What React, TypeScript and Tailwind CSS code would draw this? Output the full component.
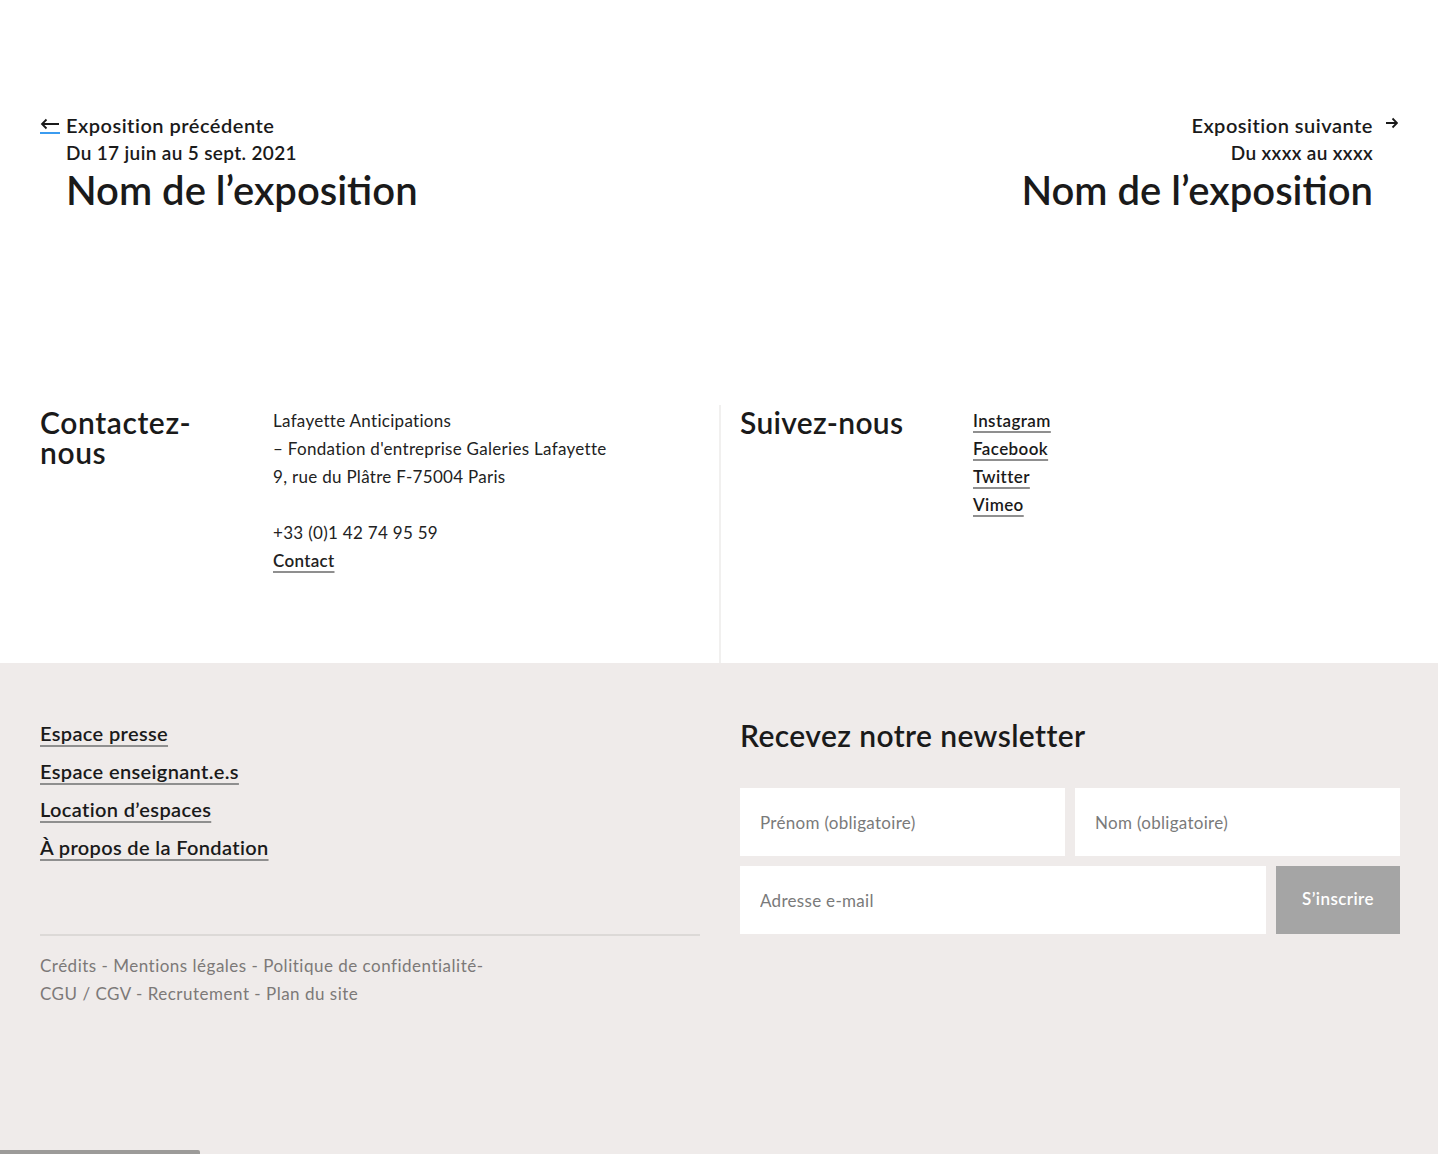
import React from 'react';

const font = { fontFamily: 'Lato, "Noto Sans", sans-serif' };

const ArrowLeft = () => (
    <svg width="20" height="12" viewBox="0 0 20 12" fill="none" stroke="#1a1a1a" strokeWidth="1.8">
        <path d="M19 6H2M6.5 1.5L2 6l4.5 4.5" />
    </svg>
);

const ArrowRight = () => (
    <svg width="12" height="12" viewBox="0 0 12 12" fill="none" stroke="#1a1a1a" strokeWidth="1.8">
        <path d="M0 6h11M6.5 1.5L11 6l-4.5 4.5" />
    </svg>
);

const linkCls = 'underline decoration-2 underline-offset-4 decoration-[#8f8f8f]';
const inputCls = 'h-[68px] bg-white px-5 text-[17px] tracking-[0.3px] text-[#666] outline-none placeholder:text-[#7a7a7a]';

const App = () => {
    return (
        <div className="min-h-[1154px] flex flex-col bg-white text-[#1a1a1a]" style={font}>
            {/* prev / next */}
            <div className="flex justify-between px-10 pt-[112px] h-[405px]">
                <div>
                    <div className="flex items-center">
                        <span className="w-[20px] mr-[6px] relative top-[1px] pb-[2px] border-b-2 border-[#3b9cf0] flex">
                            <ArrowLeft />
                        </span>
                        <span className="text-[20px] font-semibold leading-[26px] tracking-[0.5px]">Exposition précédente</span>
                    </div>
                    <div className="pl-[26px] text-[19px] font-semibold leading-[28px] mt-[1px] tracking-[0.35px]">Du 17 juin au 5 sept. 2021</div>
                    <div className="pl-[26px] text-[40px] font-semibold leading-[46px]">Nom de l’exposition</div>
                </div>
                <div className="flex flex-col items-end">
                    <div className="flex items-center">
                        <span className="text-[20px] font-semibold leading-[26px] tracking-[0.5px]">Exposition suivante</span>
                        <span className="ml-[13px] relative -top-[2px] flex"><ArrowRight /></span>
                    </div>
                    <div className="pr-[25px] text-[19px] font-semibold leading-[28px] mt-[1px] tracking-[0.35px]">Du xxxx au xxxx</div>
                    <div className="pr-[25px] text-[40px] font-semibold leading-[46px]">Nom de l’exposition</div>
                </div>
            </div>

            {/* contact / social */}
            <div className="grid grid-cols-[721px_1fr] h-[258px]">
                <div className="flex pl-10 pt-[2px] border-r-2 border-[#f1f0ef]">
                    <h2 className="w-[233px] text-[30px] font-semibold leading-[30px] tracking-[0.6px]">Contactez-<br />nous</h2>
                    <div className="text-[17px] leading-[28px] tracking-[0.3px] text-[#222]">
                        <p>Lafayette Anticipations</p>
                        <p>– Fondation d'entreprise Galeries Lafayette</p>
                        <p>9, rue du Plâtre F-75004 Paris</p>
                        <p className="mt-[28px]">+33 (0)1 42 74 95 59</p>
                        <a className={`font-semibold ${linkCls}`}>Contact</a>
                    </div>
                </div>
                <div className="flex pl-[19px] pt-[2px]">
                    <h2 className="w-[233px] text-[30px] font-semibold leading-[30px] tracking-[0.3px]">Suivez-nous</h2>
                    <div className="flex flex-col text-[17px] leading-[28px] font-semibold tracking-[0.4px]">
                        <a className={linkCls}>Instagram</a>
                        <a className={linkCls}>Facebook</a>
                        <a className={linkCls}>Twitter</a>
                        <a className={linkCls}>Vimeo</a>
                    </div>
                </div>
            </div>

            {/* footer */}
            <div className="flex-1 bg-[#efebea] flex flex-col">
                <div className="grid grid-cols-2 flex-1">
                    <div className="pl-10 pr-[19px] pt-[56px]">
                        <div className="flex flex-col items-start gap-[10px] text-[20px] font-semibold leading-[28px] tracking-[0.35px]">
                            <a className={linkCls}>Espace presse</a>
                            <a className={linkCls}>Espace enseignant.e.s</a>
                            <a className={linkCls}>Location d’espaces</a>
                            <a className={linkCls}>À propos de la Fondation</a>
                        </div>
                        <div className="mt-[73px] border-t-2 border-[#dcd9d7] pt-[16px] text-[17px] leading-[28px] tracking-[0.5px] text-[#7c7978]">
                            <p>Crédits - Mentions légales - Politique de confidentialité-</p>
                            <p>CGU / CGV - Recrutement - Plan du site</p>
                        </div>
                    </div>
                    <div className="pl-[21px] pr-[38px] pt-[54px]">
                        <h2 className="text-[30px] font-semibold leading-[36px] tracking-[0.4px]">Recevez notre newsletter</h2>
                        <div className="mt-[35px] flex flex-col gap-[10px]">
                            <div className="grid grid-cols-2 gap-[10px]">
                                <input className={inputCls} placeholder="Prénom (obligatoire)" />
                                <input className={inputCls} placeholder="Nom (obligatoire)" />
                            </div>
                            <div className="flex gap-[10px]">
                                <input className={`${inputCls} flex-1`} placeholder="Adresse e-mail" />
                                <button className="h-[68px] w-[124px] bg-[#a5a5a5] text-white text-[17px] tracking-[0.4px] font-semibold pb-[3px]">S’inscrire</button>
                            </div>
                        </div>
                    </div>
                </div>
                <div className="h-[4px] w-[200px] bg-[#9c9b99] rounded-tr-[2px]" />
            </div>
        </div>
    );
};

export default App;
